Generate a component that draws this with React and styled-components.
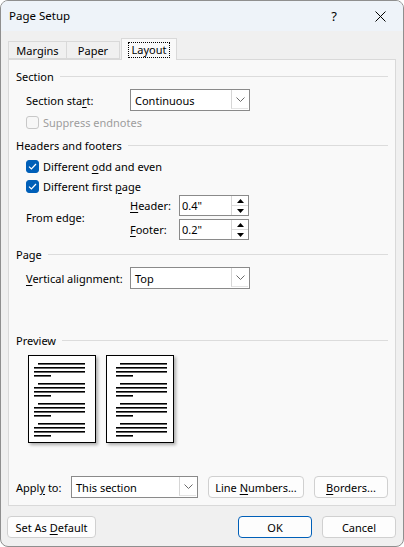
import React from 'react';
import styled, { createGlobalStyle } from 'styled-components';

const Global = createGlobalStyle`
  html, body { margin: 0; padding: 0; background: #ffffff; }
  body {
    font-family: "Noto Sans", "Liberation Sans", sans-serif;
    font-size: 11px;
    color: #000;
  }
  * { box-sizing: border-box; }
`;

const Window = styled.div`
  width: 404px;
  height: 547px;
  border: 1px solid #8f8f8f;
  border-radius: 8px;
  overflow: hidden;
  background: #f0f0f0;
  display: flex;
  flex-direction: column;
`;

const TitleBar = styled.div`
  height: 30px;
  flex: none;
  background: #eef3f9;
  display: flex;
  align-items: center;
  padding-left: 8px;
`;

const Title = styled.div`
  font-size: 11.5px;
  line-height: 16px;
  flex: 1;
`;

const TitleButton = styled.div`
  width: 46px;
  height: 30px;
  display: flex;
  align-items: center;
  justify-content: center;
  font-size: 13px;
`;

const Body = styled.div`
  flex: 1;
  display: flex;
  flex-direction: column;
  padding: 7px 7px 8px 7px;
`;

const TabStrip = styled.div`
  display: flex;
  align-items: flex-end;
  height: 21px;
  position: relative;
  z-index: 1;
`;

const Tab = styled.div`
  width: ${(p) => p.$w}px;
  height: ${(p) => (p.$active ? 22 : 18)}px;
  margin-bottom: ${(p) => (p.$active ? -1 : 0)}px;
  margin-left: ${(p) => (p.$active ? 1 : 0)}px;
  border: 1px solid #d9d9d9;
  border-bottom: ${(p) => (p.$active ? 'none' : '1px solid #d9d9d9')};
  border-left-width: ${(p) => (p.$first || p.$active ? 1 : 0)}px;
  background: ${(p) => (p.$active ? '#f9f9f9' : '#f0f0f0')};
  display: flex;
  align-items: center;
  justify-content: center;
  padding-top: ${(p) => (p.$active ? 0 : 1)}px;
`;

const TabLabel = styled.span`
  line-height: 14px;
  padding: 0 3px;
  outline: ${(p) => (p.$focus ? '1px dotted #000' : 'none')};
  outline-offset: 0;
`;

const Panel = styled.div`
  flex: 1;
  border: 1px solid #d9d9d9;
  background: #f9f9f9;
  display: flex;
  flex-direction: column;
  padding: 8px 7px 7px 7px;
`;

const GroupHeading = styled.div`
  height: 16px;
  display: flex;
  align-items: center;
  gap: 6px;
  margin-top: ${(p) => p.$mt || 0}px;
  &::after {
    content: '';
    flex: 1;
    height: 1px;
    background: #dcdcdc;
  }
`;

const FieldRow = styled.div`
  display: flex;
  align-items: center;
  padding-left: ${(p) => p.$indent ?? 10}px;
  margin-top: ${(p) => p.$mt || 0}px;
`;

const FieldLabel = styled.div`
  width: ${(p) => p.$w}px;
  flex: none;
`;

const Key = styled.span`
  text-decoration: underline;
  text-underline-offset: 2px;
`;

const Combo = styled.div`
  width: ${(p) => p.$w}px;
  height: 22px;
  border: 1px solid #8a8a8a;
  background: #fff;
  display: flex;
  align-items: stretch;
`;

const ComboText = styled.div`
  flex: 1;
  display: flex;
  align-items: center;
  padding-left: 4px;
`;

const ComboArrow = styled.div`
  width: 17px;
  margin: 0 1px 1px 0;
  border-left: 1px solid #d6d6d6;
  border-bottom: 1px solid #e4e4e4;
  display: flex;
  align-items: center;
  justify-content: center;
`;

const CheckRow = styled.div`
  height: 16px;
  display: flex;
  align-items: center;
  gap: 4px;
  padding-left: 10px;
  margin-top: ${(p) => p.$mt || 0}px;
  color: ${(p) => (p.$disabled ? '#9d9d9d' : '#000')};
`;

const CheckBox = styled.div`
  width: 13px;
  height: 13px;
  border-radius: 3px;
  flex: none;
  display: flex;
  align-items: center;
  justify-content: center;
  background: ${(p) => (p.$checked ? '#005fb8' : '#f7f7f7')};
  border: 1px solid ${(p) => (p.$checked ? '#005fb8' : '#c8c8c8')};
`;

const EdgeBlock = styled.div`
  display: flex;
  align-items: center;
  padding-left: 10px;
  margin-top: 1px;
`;

const EdgeGrid = styled.div`
  display: grid;
  grid-template-columns: 49px 70px;
  grid-auto-rows: 21px;
  row-gap: 3px;
  align-items: center;
`;

const SpinBox = styled.div`
  height: 21px;
  border: 1px solid #8a8a8a;
  background: #fff;
  display: flex;
`;

const SpinText = styled.div`
  flex: 1;
  display: flex;
  align-items: center;
  padding-left: 2px;
`;

const SpinButtons = styled.div`
  width: 17px;
  display: flex;
  flex-direction: column;
  border-left: 1px solid #d6d6d6;
`;

const SpinButton = styled.div`
  flex: 1;
  display: flex;
  align-items: center;
  justify-content: center;
  border-bottom: 1px solid #dcdcdc;
  &:last-child { border-bottom: none; }
`;

const PreviewRow = styled.div`
  display: flex;
  gap: 10px;
  padding-left: 12px;
  margin-top: 7px;
`;

const PageThumb = styled.div`
  width: 68px;
  height: 88px;
  border: 1px solid #000;
  background: #fff;
  box-shadow: 2px 2px 3px rgba(0, 0, 0, 0.3);
  svg { display: block; }
`;

const ApplyRow = styled.div`
  margin-top: auto;
  display: flex;
  align-items: center;
`;

const PushButton = styled.div`
  width: ${(p) => p.$w}px;
  height: 22px;
  margin-left: ${(p) => p.$ml || 0}px;
  border: 1px solid ${(p) => (p.$default ? '#005fb8' : '#d0d0d0')};
  border-radius: 4px;
  background: #fdfdfd;
  display: flex;
  align-items: center;
  justify-content: center;
`;

const FooterRow = styled.div`
  display: flex;
  margin: 10px 0 0 -1px;
`;

const Spacer = styled.div`
  flex: 1;
`;

const Chevron = () => (
  <svg width="9" height="5" viewBox="0 0 9 5">
    <path d="M0.5 0.5 L4.5 4.5 L8.5 0.5" fill="none" stroke="#6a6a6a" strokeWidth="1" />
  </svg>
);

const Tri = ({ up }) => (
  <svg width="7" height="4" viewBox="0 0 7 4">
    <path d={up ? 'M3.5 0 L7 4 L0 4 Z' : 'M0 0 L7 0 L3.5 4 Z'} fill="#000" />
  </svg>
);

const Tick = () => (
  <svg width="9" height="7" viewBox="0 0 9 7">
    <path d="M1 3.6 L3.4 6 L8 1" fill="none" stroke="#fff" strokeWidth="1.2" />
  </svg>
);

const Combobox = ({ w, children }) => (
  <Combo $w={w}>
    <ComboText>{children}</ComboText>
    <ComboArrow>
      <Chevron />
    </ComboArrow>
  </Combo>
);

const Spinner = ({ value }) => (
  <SpinBox>
    <SpinText>{value}</SpinText>
    <SpinButtons>
      <SpinButton><Tri up /></SpinButton>
      <SpinButton><Tri /></SpinButton>
    </SpinButtons>
  </SpinBox>
);

// A thumbnail page: four paragraphs of text lines, shifted by the gutter offset.
const PageSketch = ({ shift }) => {
  const paras = [7, 27, 47, 67];
  return (
    <PageThumb>
      <svg width="66" height="86" viewBox="0 0 66 86">
        {paras.map((y) => (
          <g key={y} fill="#000">
            <rect x={9 + shift} y={y} width={47} height={1.6} />
            <rect x={5 + shift} y={y + 4} width={51} height={1.6} />
            <rect x={5 + shift} y={y + 8} width={51} height={1.6} />
            <rect x={5 + shift} y={y + 12} width={17} height={1.6} />
          </g>
        ))}
      </svg>
    </PageThumb>
  );
};

export default function App() {
  return (
    <>
      <Global />
      <Window>
        <TitleBar>
          <Title>Page Setup</Title>
          <TitleButton>?</TitleButton>
          <TitleButton>
            <svg width="11" height="11" viewBox="0 0 11 11">
              <path d="M0.5 0.5 L10.5 10.5 M10.5 0.5 L0.5 10.5" stroke="#000" strokeWidth="1" />
            </svg>
          </TitleButton>
        </TitleBar>
        <Body>
          <TabStrip>
            <Tab $w={59} $first>Margins</Tab>
            <Tab $w={53}>Paper</Tab>
            <Tab $w={56} $active>
              <TabLabel $focus>Layout</TabLabel>
            </Tab>
          </TabStrip>
          <Panel>
            <GroupHeading>Section</GroupHeading>
            <FieldRow $mt={5}>
              <FieldLabel $w={104}>
                Section sta<Key>r</Key>t:
              </FieldLabel>
              <Combobox w={120}>Continuous</Combobox>
            </FieldRow>
            <CheckRow $mt={3} $disabled>
              <CheckBox />
              <span>Suppress endnotes</span>
            </CheckRow>

            <GroupHeading $mt={7}>Headers and footers</GroupHeading>
            <CheckRow $mt={5}>
              <CheckBox $checked><Tick /></CheckBox>
              <span>Different <Key>o</Key>dd and even</span>
            </CheckRow>
            <CheckRow $mt={4}>
              <CheckBox $checked><Tick /></CheckBox>
              <span>Different first <Key>p</Key>age</span>
            </CheckRow>
            <EdgeBlock>
              <FieldLabel $w={104}>From edge:</FieldLabel>
              <EdgeGrid>
                <span><Key>H</Key>eader:</span>
                <Spinner value={'0.4"'} />
                <span><Key>F</Key>ooter:</span>
                <Spinner value={'0.2"'} />
              </EdgeGrid>
            </EdgeBlock>

            <GroupHeading $mt={6}>Page</GroupHeading>
            <FieldRow $mt={5}>
              <FieldLabel $w={104}>
                <Key>V</Key>ertical alignment:
              </FieldLabel>
              <Combobox w={120}>Top</Combobox>
            </FieldRow>

            <GroupHeading $mt={43}>Preview</GroupHeading>
            <PreviewRow>
              <PageSketch shift={0} />
              <PageSketch shift={4} />
            </PreviewRow>

            <ApplyRow>
              <FieldLabel $w={55}>
                Appl<Key>y</Key> to:
              </FieldLabel>
              <Combobox w={127}>This section</Combobox>
              <PushButton $w={96} $ml={10}>
                <span>Line <Key>N</Key>umbers...</span>
              </PushButton>
              <PushButton $w={74} $ml={10}>
                <span><Key>B</Key>orders...</span>
              </PushButton>
            </ApplyRow>
          </Panel>
          <FooterRow>
            <PushButton $w={89}>
              <span>Set As <Key>D</Key>efault</span>
            </PushButton>
            <Spacer />
            <PushButton $w={74} $default>OK</PushButton>
            <PushButton $w={74} $ml={10}>Cancel</PushButton>
          </FooterRow>
        </Body>
      </Window>
    </>
  );
}
